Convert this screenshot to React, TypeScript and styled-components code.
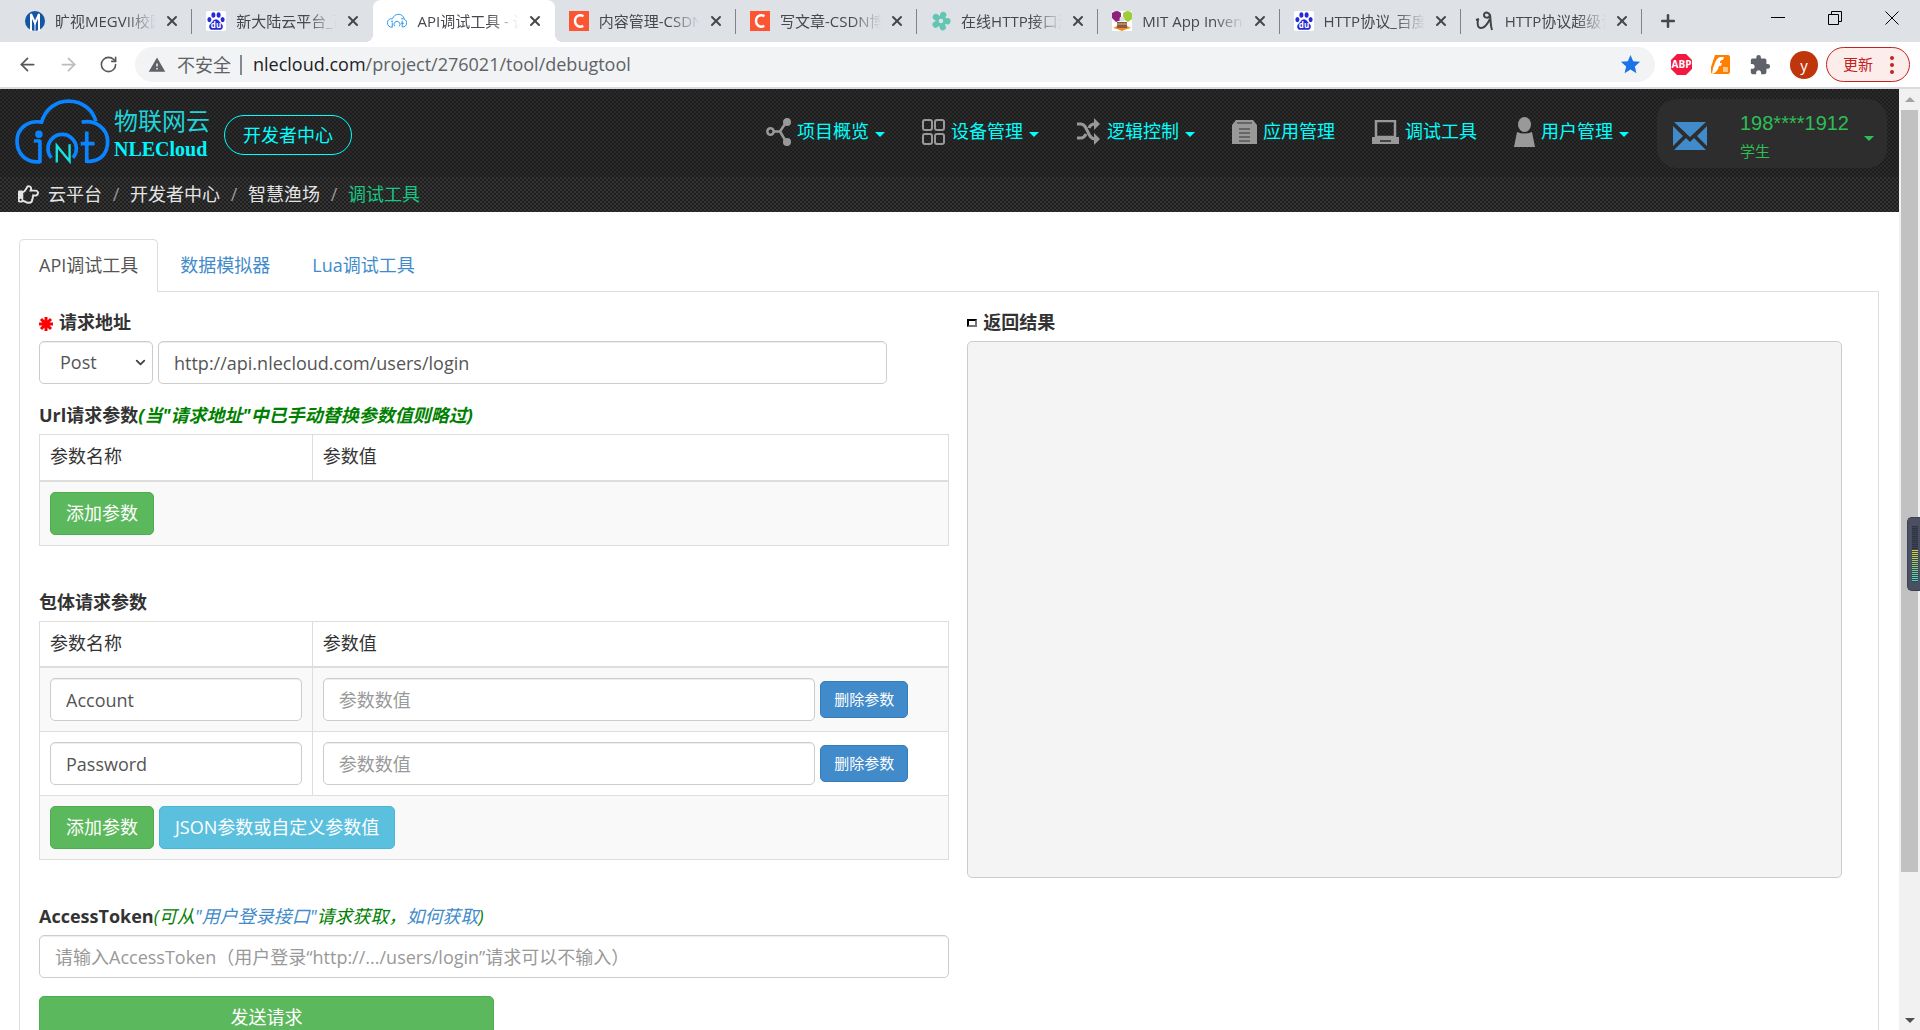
import React from "react";
import styled, { createGlobalStyle } from "styled-components";
import { ArrowLeft, ArrowRight, ChevronDown, Plus, RotateCw, X } from "lucide-react";
import { FaRegHandPointRight } from "react-icons/fa";
import { MdExtension, MdStar, MdWarning } from "react-icons/md";

const sans = `"Open Sans", "Noto Sans CJK SC", sans-serif`;

const GlobalStyle = createGlobalStyle`
  *, *::before, *::after { box-sizing: border-box; }
  body { margin: 0; overflow: hidden; background: #fff; color: #333; font: 18px/25px ${sans}; }
  button, input, select { font: inherit; color: inherit; margin: 0; }
  button { cursor: pointer; }
  a { text-decoration: none; color: #428bca; }
`;

const Window = styled.div`
  height: 100vh;
  display: flex;
  flex-direction: column;
`;

/* ---------- browser chrome ---------- */

const TabStrip = styled.div`
  display: flex;
  flex: none;
  height: 42px;
  padding-left: 11px;
  background: #dee1e6;
`;

const Tabs = styled.div`
  display: flex;
  flex: 0 1 1631px;
  min-width: 0;
`;

const BrowserTab = styled.div<{ $active?: boolean; $line?: boolean }>`
  position: relative;
  display: flex;
  align-items: center;
  flex: 1 1 0;
  min-width: 0;
  padding: 0 12px 6px 14px;
  height: 42px;
  border-radius: 8px 8px 0 0;
  background: ${(p) => (p.$active ? "#fff" : "transparent")};
  &::before, &::after {
    content: "";
    display: ${(p) => (p.$active ? "block" : "none")};
    position: absolute;
    bottom: 0;
    width: 8px;
    height: 8px;
  }
  &::before { left: -8px; background: radial-gradient(circle at 0 0, transparent 8px, #fff 8px); }
  &::after { right: -8px; background: radial-gradient(circle at 100% 0, transparent 8px, #fff 8px); }
  ${(p) =>
    p.$line &&
    `&::after { display: block; right: 0; top: 9px; bottom: auto; width: 1px; height: 25px; background: #808387; }`}
`;

const Favicon = styled.svg`
  flex: none;
  width: 20px;
  height: 20px;
  margin-top: 6px;
`;

const TabTitle = styled.span`
  flex: 1;
  min-width: 0;
  margin: 6px 8px 0 10px;
  overflow: hidden;
  white-space: nowrap;
  font-size: 15px;
  line-height: 20px;
  color: #45484c;
  mask-image: linear-gradient(to right, #000 calc(100% - 30px), transparent);
`;

const PlainButton = styled.button`
  display: inline-flex;
  align-items: center;
  justify-content: center;
  flex: none;
  padding: 0;
  border: 0;
  background: none;
  color: #45484c;
`;

const TabClose = styled(PlainButton)`
  width: 16px;
  height: 16px;
  margin-top: 6px;
`;

const NewTab = styled(PlainButton)`
  width: 52px;
`;

const WindowControls = styled.div`
  display: flex;
  margin-left: auto;
  button { width: 57px; height: 36px; }
`;

const Toolbar = styled.div`
  display: flex;
  align-items: center;
  flex: none;
  height: 47px;
  padding: 0 10px 0 17px;
  border-bottom: 2px solid #dadae0;
  background: #fff;
`;

const NavButtons = styled.div`
  display: flex;
  gap: 20px;
  margin-right: 17px;
`;

const AddressBar = styled.div`
  display: flex;
  align-items: center;
  flex: 1;
  min-width: 0;
  height: 35px;
  padding: 0 13px;
  border-radius: 18px;
  background: #f1f3f4;
  color: #5f6368;
`;

const Insecure = styled.span`
  padding: 0 9px 0 11px;
  margin-right: 11px;
  line-height: 20px;
  border-right: 2px solid #85888c;
`;

const Address = styled.span`
  flex: 1;
  min-width: 0;
  b { font-weight: 400; color: #202124; }
`;

const Extensions = styled.div`
  display: flex;
  align-items: center;
  gap: 19px;
  margin: 0 8px 0 16px;
`;

const Avatar = styled(PlainButton)`
  width: 28px;
  height: 28px;
  border-radius: 50%;
  background: #bf360c;
  color: #fff;
  font-size: 15px;
  line-height: 20px;
`;

const UpdateButton = styled.button`
  display: flex;
  align-items: center;
  justify-content: space-between;
  width: 84px;
  height: 35px;
  padding: 0 15px 0 16px;
  border: 1px solid #c5221f;
  border-radius: 18px;
  background: #fcecea;
  color: #c5221f;
  font-size: 15px;
`;

/* ---------- page ---------- */

const Viewport = styled.div`
  display: flex;
  flex: 1;
  min-height: 0;
`;

const Page = styled.div`
  flex: 1;
  min-width: 0;
  overflow: hidden;
`;

const weave = (a: string, b: string) =>
  `repeating-conic-gradient(${a} 0 25%, ${b} 0 50%) 0 0 / 4px 4px`;

const Header = styled.header`
  display: flex;
  align-items: flex-start;
  height: 88px;
  padding: 10px 12px 0 15px;
  background: ${weave("#1e1e1e", "#2a2a2a")};
`;

const Brand = styled.a`
  display: flex;
  gap: 4px;
  color: #00f0ff;
`;

const BrandText = styled.span`
  display: flex;
  flex-direction: column;
  padding-top: 8px;
  font-size: 24px;
  line-height: 28px;
  color: #1fd3d8;
  strong {
    font: 700 20px/28px "Liberation Serif", serif;
    color: #00f6ff;
  }
`;

const DevCenter = styled.a`
  margin: 16px 0 0 14px;
  height: 40px;
  padding: 0 18px;
  border: 1px solid #0ff;
  border-radius: 20px;
  color: #0ff;
  line-height: 38px;
  white-space: nowrap;
`;

const MainNav = styled.nav`
  display: flex;
  gap: 37px;
  margin: 11px 28px 0 auto;
`;

const NavItem = styled.a`
  display: flex;
  align-items: center;
  height: 43px;
  gap: 6px;
  color: #0ff;
  white-space: nowrap;
`;

const Caret = styled.i<{ $color?: string }>`
  width: 10px;
  margin-top: 6px;
  border: 5px solid transparent;
  border-top-color: ${(p) => p.$color || "#0ff"};
  border-bottom: 0;
`;

const UserBox = styled.div`
  display: flex;
  align-items: center;
  width: 230px;
  height: 69px;
  padding: 4px 13px 0 16px;
  border-radius: 20px;
  background: #2d2d2d;
  color: #2dbe55;
`;

const UserText = styled.div`
  display: flex;
  flex-direction: column;
  flex: 1;
  margin-left: 33px;
  font: 20px/24px "Liberation Sans", sans-serif;
  small { padding-top: 6px; font: 15px/20px ${sans}; }
`;

const Breadcrumb = styled.nav`
  display: flex;
  align-items: center;
  height: 35px;
  gap: 9px;
  padding: 0 18px;
  background: ${weave("#1e1e1e", "#343434")};
  color: #999;
  a { color: #e4e4e4; }
  span[aria-current] { color: #14c784; }
`;

const Slash = styled.span`
  width: 10px;
  text-align: center;
`;

const Content = styled.main`
  padding: 27px 20px 0 19px;
`;

const PageTabs = styled.div`
  display: flex;
  gap: 2px;
  border-bottom: 1px solid #ddd;
`;

const PageTab = styled.button<{ $active?: boolean }>`
  height: 53px;
  margin-bottom: -1px;
  padding: 0 19px;
  border: 1px solid;
  border-color: ${(p) => (p.$active ? "#ddd #ddd #fff" : "transparent")};
  border-radius: 5px 5px 0 0;
  background: ${(p) => (p.$active ? "#fff" : "none")};
  color: ${(p) => (p.$active ? "#555" : "#428bca")};
`;

const Panel = styled.div`
  display: grid;
  grid-template-columns: minmax(0, 51fr) minmax(0, 49fr);
  gap: 18px;
  padding: 18px 36px 40px 19px;
  border: 1px solid #ddd;
  border-top: 0;
`;

const Form = styled.form`
  display: flex;
  flex-direction: column;
`;

const Title = styled.label`
  display: flex;
  align-items: center;
  height: 25px;
  margin: 0 0 6px;
  font-size: 18px;
  font-weight: 700;
  em { color: #008000; }
`;

const TokenTitle = styled(Title)`
  em { font-weight: 400; }
`;

const Star = styled.svg`
  width: 14px;
  height: 14px;
  margin: 3px 6px 0 0;
  stroke: #f00;
  stroke-width: 3;
`;

const AddressRow = styled.div`
  display: flex;
  gap: 5px;
  margin-bottom: 19px;
  padding-right: 62px;
`;

const Field = styled.input`
  min-width: 0;
  width: 100%;
  height: 43px;
  padding: 0 15px;
  border: 1px solid #ccc;
  border-radius: 5px;
  background: #fff;
  box-shadow: inset 0 1px 1px rgba(0, 0, 0, 0.075);
  color: #555;
  outline: 0;
  &::placeholder { color: #999; opacity: 1; }
`;

const SelectWrap = styled.div`
  position: relative;
  flex: none;
  width: 114px;
  svg { position: absolute; right: 5px; top: 14px; pointer-events: none; }
`;

const Select = styled(Field).attrs({ as: "select" })`
  appearance: none;
  padding-left: 20px;
`;

const Table = styled.table`
  width: 100%;
  table-layout: fixed;
  border-collapse: collapse;
  margin-bottom: 44px;
  th, td { border: 1px solid #ddd; padding: 10px; text-align: left; }
  th { height: 46px; padding-top: 9px; border-bottom-width: 2px; font-weight: 400; line-height: 25px; }
  th:first-child { width: 30%; }
  tbody tr:nth-child(odd) { background: #f9f9f9; }
`;

const CellRow = styled.div`
  display: flex;
  align-items: center;
  gap: 5px;
`;

const ValueField = styled(Field)`
  width: 80%;
`;

const Button = styled.button<{ $tone?: "info" | "primary" }>`
  flex: none;
  height: ${(p) => (p.$tone === "primary" ? 37 : 43)}px;
  padding: 0 ${(p) => (p.$tone === "primary" ? 13 : 15)}px;
  border: 1px solid ${(p) => ({ info: "#46b8da", primary: "#357ebd", none: "#4cae4c" })[p.$tone || "none"]};
  border-radius: 5px;
  background: ${(p) => ({ info: "#5bc0de", primary: "#428bca", none: "#5cb85c" })[p.$tone || "none"]};
  color: #fff;
  font-size: ${(p) => (p.$tone === "primary" ? 15 : 18)}px;
  white-space: nowrap;
`;

const SendButton = styled(Button)`
  width: 50%;
  margin-top: 18px;
`;

const ResultMark = styled.i`
  width: 10px;
  height: 8px;
  margin-right: 6px;
  border: 2px inset #222;
`;

const Result = styled.div`
  height: 537px;
  border: 1px solid #ccc;
  border-radius: 5px;
  background: #f4f4f4;
`;

const Scrollbar = styled.div`
  display: flex;
  flex-direction: column;
  align-items: center;
  justify-content: space-between;
  flex: none;
  width: 21px;
  padding: 8px 0 7px;
  background: #f1f1f1;
`;

const Arrow = styled.i<{ $down?: boolean }>`
  border: 5px solid transparent;
  ${(p) => (p.$down ? "border-top-color: #505050; border-bottom: 0;" : "border-bottom-color: #a3a3a3; border-top: 0;")}
`;

const Track = styled.div`
  flex: 1;
  width: 17px;
  margin: 8px 0 11px;
`;

const Thumb = styled.div`
  height: 85%;
  background: #c1c1c1;
`;

const Meter = styled.div`
  position: fixed;
  right: 0;
  top: 517px;
  width: 13px;
  height: 74px;
  padding: 8px 2px 8px 4px;
  border-radius: 5px 0 0 5px;
  border: 1px solid #3b4050;
  border-right: 0;
  background: #4a5062;
  &::before {
    content: "";
    display: block;
    height: 100%;
    background: repeating-linear-gradient(transparent 0 1px, #3d4352 1px 2px),
      linear-gradient(#2f3442 0 42%, #d8d23c 43%, #8fce7a 70%, #35dcc8);
  }
`;

/* ---------- drawings ---------- */

const Baidu = () => (
  <Favicon viewBox="0 0 20 20">
    <rect width="20" height="20" rx="2" fill="#fff" />
    <g fill="#2529d8">
      <ellipse cx="3.4" cy="8.6" rx="2" ry="2.6" />
      <ellipse cx="7.4" cy="4" rx="2" ry="2.8" />
      <ellipse cx="12.6" cy="4" rx="2" ry="2.8" />
      <ellipse cx="16.6" cy="8.6" rx="2" ry="2.6" />
      <path d="M10 8.2c2.400 0 3.200 2.300 5 4 1.800 1.600 2.400 3.500 1.300 5.200-1.200 1.900-3.500 1.300-6.300 1.300s-5.100.6-6.300-1.300c-1.100-1.700-.5-3.600 1.300-5.200 1.800-1.700 2.600-4 5-4z" />
    </g>
    <text x="10" y="17.300" fontSize="8" fontWeight="700" fill="#fff" textAnchor="middle" fontFamily="Open Sans">du</text>
  </Favicon>
);

const Megvii = () => (
  <Favicon viewBox="0 0 20 20">
    <circle cx="10" cy="10" r="10" fill="#1455a4" />
    <path d="M6 20V3l4 9 4-9v17" fill="none" stroke="#fff" strokeWidth="2" />
    <path d="M10 12v8" stroke="#fff" strokeWidth="1" />
  </Favicon>
);

const CloudShape = () => (
  <>
    <path d="M74 190V122M74 186C30 190 6 160 6 124C6 88 36 62 79 68C90 30 122 6 158 6C200 6 232 32 240 66" />
    <path d="M198 68C240 60 275 88 275 126C275 164 250 188 213 184V96M195 132H236" />
    <path d="M108 174A42 42 0 1 1 172 174" />
  </>
);

const CloudIcon = () => (
  <Favicon viewBox="0 -40 280 280">
    <g fill="none" stroke="#2f9bf0" strokeWidth="14"><CloudShape /></g>
    <circle cx="71" cy="104" r="12" fill="#2f9bf0" />
  </Favicon>
);

const Csdn = () => (
  <Favicon viewBox="0 0 20 20">
    <rect width="20" height="20" fill="#fc5531" />
    <path d="M14.500 5.200C10 2.800 6 5.600 6 10s4 7 8.300 4.900" fill="none" stroke="#fff" strokeWidth="2.400" />
  </Favicon>
);

const Flower = () => (
  <Favicon viewBox="0 0 20 20">
    <g fill="#62c6b2">
      {[20, 92, 164, 236, 308].map((a) => (
        <circle key={a} cx="10" cy="3.600" r="3.200" transform={`rotate(${a} 10 10)`} />
      ))}
      <circle cx="10" cy="10" r="5.500" />
    </g>
    <circle cx="10" cy="10" r="2.300" fill="#dee1e6" />
  </Favicon>
);

const AppInventor = () => (
  <Favicon viewBox="0 0 20 20">
    <rect width="20" height="20" fill="#fff" />
    <path d="M0 2Q5-2 9 2V9L4 11L0 7z" fill="#8e2180" />
    <path d="M11 2Q16-2 20 2V8L16 11L11 8z" fill="#a0cc3a" />
    <circle cx="10" cy="8" r="2.500" fill="#ddd" />
    <path d="M5 11h10v6H5z" fill="#8a5c3c" />
    <path d="M5 13h10" stroke="#d9b48c" />
    <path d="M1 17l4-2v2h10v-2l4 2-4 1-5 2-5-2z" fill="#f28a2c" />
  </Favicon>
);

const Scribble = () => (
  <Favicon viewBox="0 0 20 20">
    <path d="M3 8c-1 6 0 9 3 9 4 0 7-5 9-9M15 7c1-6-6-7-6-3 0 3 5 4 6 0 1 5 0 9 2 15M1 9l3-1" fill="none" stroke="#444" strokeWidth="2" />
  </Favicon>
);

const LogoMark = () => (
  <svg width="95" height="65" viewBox="0 0 282 192">
    <g fill="none" stroke="#0a84ff" strokeWidth="11">
      <CloudShape />
    </g>
    <path d="M56 124H76" stroke="#0a84ff" strokeWidth="10" />
    <circle cx="71" cy="104" r="11" fill="#0a84ff" />
    <path d="M124 188V138L162 184V134" fill="none" stroke="#14e4e0" strokeWidth="7" />
  </svg>
);

const ShareIcon = () => (
  <svg width="25" height="28" viewBox="0 0 25 28" stroke="#999" strokeWidth="2.500" fill="none">
    <circle cx="4.500" cy="13.500" r="3.200" />
    <path d="M8 13.500h6M14 13.500l6-9M14 13.500l6 10" />
    <circle cx="21" cy="4" r="2.800" fill="#999" />
    <circle cx="21" cy="24" r="2.800" fill="#999" />
  </svg>
);
const GridIcon = () => (
  <svg width="23" height="26" viewBox="0 0 23 26" stroke="#999" strokeWidth="2" fill="none">
    {[[1, 1], [13, 1], [1, 15], [13, 15]].map(([x, y]) => (
      <rect key={`${x}-${y}`} x={x} y={y} width="9" height="10" rx="2" />
    ))}
  </svg>
);
const ShuffleIcon = () => (
  <svg width="25" height="28" viewBox="0 0 25 28" stroke="#999" strokeWidth="3" fill="none">
    <path d="M1 6h4c7 0 6 15 14 15h2M1 20h4c3 0 4-2 5-4M13 10c1-3 3-4 6-4h2" />
    <path d="M18 0l6 6-6 6zM18 15l6 6-6 6z" fill="#999" stroke="none" />
  </svg>
);
const AppIcon = () => (
  <svg width="25" height="24" viewBox="0 0 25 24">
    <path d="M4 0h17l4 5v19H0V5z" fill="#999" />
    <path d="M5 3h15M7 9h11M7 13h11M7 17h11M7 21h11" stroke="#555" strokeWidth="1.500" />
  </svg>
);
const LaptopIcon = () => (
  <svg width="27" height="24" viewBox="0 0 27 24">
    <path d="M4 1h19v16H4z" fill="none" stroke="#999" strokeWidth="2.500" />
    <path d="M0 17h27v7H0z" fill="#999" />
    <path d="M8 21h11" stroke="#444" strokeWidth="2" />
  </svg>
);
const UserIcon = () => (
  <svg width="21" height="30" viewBox="0 0 21 30" fill="#999">
    <ellipse cx="10.500" cy="7.500" rx="6.500" ry="7.500" />
    <path d="M3 15q7 3 15 0l3 15H0z" />
  </svg>
);
const MailIcon = () => (
  <svg width="34" height="28" viewBox="0 0 34 28" fill="#428bca">
    <path d="M1 0h32L17 15zM0 4l10 10L0 24zM34 4L24 14l10 10zM1 28l12-12 4 4 4-4 12 12z" />
  </svg>
);

/* ---------- data ---------- */

const browserTabs = [
  { title: "旷视MEGVII校园", icon: Megvii, line: true },
  { title: "新大陆云平台_百度搜索", icon: Baidu },
  { title: "API调试工具 - 调试工具", icon: CloudIcon, active: true },
  { title: "内容管理-CSDN博客", icon: Csdn, line: true },
  { title: "写文章-CSDN博客", icon: Csdn, line: true },
  { title: "在线HTTP接口测试", icon: Flower, line: true },
  { title: "MIT App Inventor", icon: AppInventor, line: true },
  { title: "HTTP协议_百度百科", icon: Baidu, line: true },
  { title: "HTTP协议超级详解", icon: Scribble, line: true },
];

const navItems = [
  { label: "项目概览", icon: ShareIcon, caret: true },
  { label: "设备管理", icon: GridIcon, caret: true },
  { label: "逻辑控制", icon: ShuffleIcon, caret: true },
  { label: "应用管理", icon: AppIcon },
  { label: "调试工具", icon: LaptopIcon },
  { label: "用户管理", icon: UserIcon, caret: true },
];

const crumbs = ["云平台", "开发者中心", "智慧渔场"];

const ParamHead = () => (
  <thead>
    <tr>
      <th>参数名称</th>
      <th>参数值</th>
    </tr>
  </thead>
);

export default function App() {
  return (
    <Window>
      <GlobalStyle />
      <TabStrip>
        <Tabs>
          {browserTabs.map(({ title, icon: Icon, active, line }) => (
            <BrowserTab key={title} $active={active} $line={line}>
              <Icon />
              <TabTitle>{title}</TabTitle>
              <TabClose aria-label="关闭"><X size={16} strokeWidth={3} /></TabClose>
            </BrowserTab>
          ))}
        </Tabs>
        <NewTab aria-label="新标签页"><Plus size={20} strokeWidth={3} /></NewTab>
        <WindowControls>
          <PlainButton aria-label="最小化">
            <svg width="14" height="14" stroke="#000"><path d="M0 6.500h14" /></svg>
          </PlainButton>
          <PlainButton aria-label="还原">
            <svg width="14" height="14" stroke="#000" fill="none"><path d="M.5 3.500h10v10H.5zM3.500 3V.5h10v10H11" /></svg>
          </PlainButton>
          <PlainButton aria-label="关闭窗口">
            <svg width="14" height="14" stroke="#000"><path d="M.5.5l13 13M13.500.5l-13 13" /></svg>
          </PlainButton>
        </WindowControls>
      </TabStrip>

      <Toolbar>
        <NavButtons>
          <PlainButton aria-label="后退"><ArrowLeft size={21} color="#54575b" /></PlainButton>
          <PlainButton aria-label="前进"><ArrowRight size={21} color="#bbbdc0" /></PlainButton>
          <PlainButton aria-label="刷新"><RotateCw size={19} color="#54575b" /></PlainButton>
        </NavButtons>
        <AddressBar>
          <MdWarning size={18} />
          <Insecure>不安全</Insecure>
          <Address><b>nlecloud.com</b>/project/276021/tool/debugtool</Address>
          <MdStar size={23} color="#1a73e8" />
        </AddressBar>
        <Extensions>
          <svg width="21" height="21" viewBox="0 0 21 21">
            <path d="M6 0h9l6 6v9l-6 6H6l-6-6V6z" fill="#f2183f" />
            <text x="10.500" y="14" fontSize="10" fontWeight="700" fill="#fff" textAnchor="middle" fontFamily="Open Sans">ABP</text>
          </svg>
          <svg width="19" height="19" viewBox="0 0 19 19">
            <rect width="19" height="19" rx="2" fill="#ff7f00" />
            <path d="M0 0h4L0 12zM2 13c2-4 3-11 8-11h3L12 5c-3 0-3 2-3 3h2l-1 3H8c-1 4-3 7-7 8z" fill="#fff" />
            <path d="M12 12h5v5h-5z" fill="#ffc48a" />
          </svg>
          <MdExtension size={22} color="#5f6368" />
          <Avatar aria-label="个人资料">y</Avatar>
        </Extensions>
        <UpdateButton>
          更新
          <svg width="4" height="18" viewBox="0 0 4 18" fill="#c5221f">
            <circle cx="2" cy="2" r="2" /><circle cx="2" cy="9" r="2" /><circle cx="2" cy="16" r="2" />
          </svg>
        </UpdateButton>
      </Toolbar>

      <Viewport>
        <Page>
          <Header>
            <Brand href="#">
              <LogoMark />
              <BrandText>物联网云<strong>NLECloud</strong></BrandText>
            </Brand>
            <DevCenter href="#">开发者中心</DevCenter>
            <MainNav>
              {navItems.map(({ label, icon: Icon, caret }) => (
                <NavItem href="#" key={label}>
                  <Icon />
                  {label}
                  {caret && <Caret />}
                </NavItem>
              ))}
            </MainNav>
            <UserBox>
              <MailIcon />
              <UserText>198****1912<small>学生</small></UserText>
              <Caret $color="#2dbe55" />
            </UserBox>
          </Header>
          <Breadcrumb>
            <FaRegHandPointRight size={21} color="#e4e4e4" />
            {crumbs.map((c) => (
              <React.Fragment key={c}>
                <a href="#">{c}</a>
                <Slash>/</Slash>
              </React.Fragment>
            ))}
            <span aria-current="page">调试工具</span>
          </Breadcrumb>

          <Content>
            <PageTabs>
              <PageTab $active>API调试工具</PageTab>
              <PageTab>数据模拟器</PageTab>
              <PageTab>Lua调试工具</PageTab>
            </PageTabs>
            <Panel>
              <Form>
                <Title htmlFor="url">
                  <Star viewBox="0 0 14 14"><path d="M7 0v14M0 7h14M2 2l10 10M12 2L2 12" /></Star>
                  请求地址
                </Title>
                <AddressRow>
                  <SelectWrap>
                    <Select aria-label="请求方式" defaultValue="Post">
                      <option>Post</option>
                    </Select>
                    <ChevronDown size={15} strokeWidth={3} color="#444" />
                  </SelectWrap>
                  <Field id="url" defaultValue="http://api.nlecloud.com/users/login" />
                </AddressRow>

                <Title as="div">Url请求参数<em>(当"请求地址"中已手动替换参数值则略过)</em></Title>
                <Table>
                  <ParamHead />
                  <tbody>
                    <tr>
                      <td colSpan={2}><CellRow><Button type="button">添加参数</Button></CellRow></td>
                    </tr>
                  </tbody>
                </Table>

                <Title as="div">包体请求参数</Title>
                <Table>
                  <ParamHead />
                  <tbody>
                    {["Account", "Password"].map((name) => (
                      <tr key={name}>
                        <td><CellRow><Field aria-label="参数名称" defaultValue={name} /></CellRow></td>
                        <td>
                          <CellRow>
                            <ValueField aria-label={name} placeholder="参数数值" />
                            <Button type="button" $tone="primary">删除参数</Button>
                          </CellRow>
                        </td>
                      </tr>
                    ))}
                    <tr>
                      <td colSpan={2}>
                        <CellRow>
                          <Button type="button">添加参数</Button>
                          <Button type="button" $tone="info">JSON参数或自定义参数值</Button>
                        </CellRow>
                      </td>
                    </tr>
                  </tbody>
                </Table>

                <TokenTitle htmlFor="token">
                  AccessToken
                  <em>(可从<a href="#">"用户登录接口"</a>请求获取，<a href="#">如何获取</a>)</em>
                </TokenTitle>
                <Field id="token" placeholder="请输入AccessToken（用户登录“http://.../users/login”请求可以不输入）" />
                <SendButton type="button">发送请求</SendButton>
              </Form>
              <section>
                <Title as="h2"><ResultMark />返回结果</Title>
                <Result />
              </section>
            </Panel>
          </Content>
        </Page>
        <Scrollbar>
          <Arrow />
          <Track><Thumb /></Track>
          <Arrow $down />
        </Scrollbar>
      </Viewport>
      <Meter />
    </Window>
  );
}
